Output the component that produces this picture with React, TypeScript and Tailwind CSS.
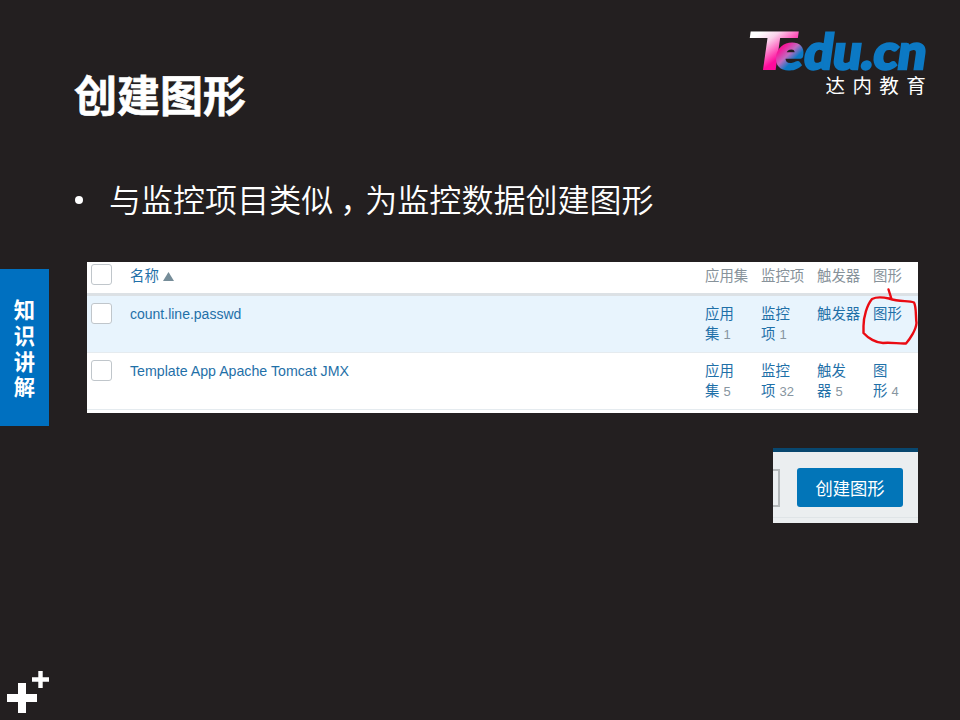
import React from "react";

const CJK = "font-['Noto_Sans_CJK_SC',sans-serif]";
const MIXED = "font-['Liberation_Sans','Noto_Sans_CJK_SC',sans-serif]";

function Logo() {
  return (
    <svg width="190" height="80" viewBox="740 22 190 80" className="block overflow-visible">
      <defs>
        <linearGradient id="tFill" gradientUnits="userSpaceOnUse" x1="6" y1="-36" x2="27" y2="-20">
          <stop offset="0" stopColor="#ffffff" />
          <stop offset="0.35" stopColor="#fbd3ec" />
          <stop offset="1" stopColor="#ff0a9c" />
        </linearGradient>
        <linearGradient id="eFill" gradientUnits="userSpaceOnUse" x1="4" y1="-20" x2="20" y2="-7">
          <stop offset="0" stopColor="#f5189a" />
          <stop offset="0.45" stopColor="#c06bc0" />
          <stop offset="0.85" stopColor="#0c79c4" />
        </linearGradient>
      </defs>
      <g fontFamily="Lato" fontWeight="900">
        <text transform="translate(744 70) skewX(-8) scale(1.58 1)" fontSize="53" fill="url(#tFill)">T</text>
        <text transform="translate(774 69) skewX(-8) scale(1.06 1)" fontSize="48.500" fill="url(#eFill)" stroke="url(#eFill)" strokeWidth="2.400">e</text>
        <text transform="translate(802.500 69) skewX(-8)" fontSize="48.500" fill="#0c79c4" stroke="#0c79c4" strokeWidth="2.600" textLength="122" lengthAdjust="spacingAndGlyphs">du.cn</text>
      </g>
      <text x="825.5" y="93" fontFamily="Noto Sans CJK SC" fontSize="19.5" letterSpacing="7.400" fill="#ffffff">达内教育</text>
    </svg>
  );
}

function Check() {
  return <span className="block h-[21px] w-[21px] shrink-0 rounded-[3px] border border-[#c0c6cb] bg-white" />;
}

function Cell({ lines, count }: { lines: string[]; count?: string }) {
  return (
    <div className="w-14 shrink-0 whitespace-nowrap text-[#1f70a8]">
      {lines.map((line, i) => (
        <div key={line} className="h-5">
          {line}
          {count && i === lines.length - 1 && <span className="ml-1 text-[13px] text-[#8795a0]">{count}</span>}
        </div>
      ))}
    </div>
  );
}

export default function App() {
  return (
    <div className={`flex h-[720px] w-[960px] overflow-hidden bg-[#231f20] text-white ${CJK}`}>
      <aside className="flex w-[49px] shrink-0 flex-col justify-between pt-[269px]">
        <div className="flex h-[157px] flex-col items-center justify-center bg-[#0070c0] text-[21.3px] leading-[25.6px] font-bold">
          <span>知</span>
          <span>识</span>
          <span>讲</span>
          <span>解</span>
        </div>
        <svg width="49" height="60" viewBox="0 660 49 60" className="block" fill="#fff">
          <path d="M18 683h8v11h11v8h-11v11h-8v-11h-11v-8h11zM38.300 671h4.400v6.300h6.300v4.400h-6.300v6.300h-4.400v-6.300h-6.300v-4.400h6.300z" />
        </svg>
      </aside>

      <main className="flex w-[911px] flex-col">
        <header className="flex h-[150px] justify-between pt-[22px] pr-[30px] pl-[25px]">
          <h1 className="pt-[39px] text-[43px] leading-[64px] font-bold [-webkit-text-stroke:0.6px_white]">创建图形</h1>
          <Logo />
        </header>

        <div className="flex h-[112px] items-start pt-[24px] pl-[26px]">
          <span className="mt-[22px] mr-[26px] h-2 w-2 rounded-full bg-white" />
          <p className="text-[32px] leading-[48px] font-[350] tracking-[0.04px] whitespace-nowrap">与监控项目类似<span className="inline-block w-8 translate-x-[7px]">，</span>为监控数据创建图形</p>
        </div>

        <section className={`relative ml-[38px] h-[151px] w-[831px] shrink-0 bg-white text-[14.4px] leading-5 ${MIXED}`}>
          <div className="flex h-[34px] border-b-[3px] border-[#dce1e5] pt-[2px] pl-1">
            <Check />
            <div className="mt-[2px] ml-[18px] flex w-[575px] shrink-0 gap-1 text-[#1f70a8]">
              名称
              <svg width="12" height="20" viewBox="0 0 12 20" fill="#768d99">
                <path d="M0 15L5.500 6L11 15z" />
              </svg>
            </div>
            <div className="mt-[2px] flex whitespace-nowrap text-[#87929a]">
              <span className="w-14 shrink-0">应用集</span>
              <span className="w-14 shrink-0">监控项</span>
              <span className="w-14 shrink-0">触发器</span>
              <span className="w-10 shrink-0">图形</span>
            </div>
          </div>
          <div className="flex h-[57px] border-b border-[#e5ebef] bg-[#e8f4fd] pt-[7px] pl-1">
            <Check />
            <div className="mt-[1px] ml-[18px] w-[575px] shrink-0 text-[14px] text-[#1f70a8]">count.line.passwd</div>
            <div className="mt-[1px] flex">
              <Cell lines={["应用", "集"]} count="1" />
              <Cell lines={["监控", "项"]} count="1" />
              <Cell lines={["触发器"]} />
              <Cell lines={["图形"]} />
            </div>
          </div>
          <div className="flex h-[57px] border-b border-[#e5ebef] pt-[7px] pl-1">
            <Check />
            <div className="mt-[1px] ml-[18px] w-[575px] shrink-0 text-[14.2px] text-[#1f70a8]">Template App Apache Tomcat JMX</div>
            <div className="mt-[1px] flex">
              <Cell lines={["应用", "集"]} count="5" />
              <Cell lines={["监控", "项"]} count="32" />
              <Cell lines={["触发", "器"]} count="5" />
              <Cell lines={["图", "形"]} count="4" />
            </div>
          </div>
          <svg className="absolute top-0 right-0" width="61" height="90" viewBox="857 262 61 90" fill="none" stroke="#ea0b13" strokeWidth="2.400" strokeLinecap="round" strokeLinejoin="round">
            <path d="M888.500 289.500L891.500 299M889 298.500C882 297 876 297 872 299C867 305 863.500 317 863.500 326V333C868 338 876 343 883 343C891 342 899 344 906 343.500C910 339 916 330 916.500 323C915.500 316 916.500 307 914 302.500C908 300 900 302.500 889 298.500" />
          </svg>
        </section>

        <section className="mt-[35px] ml-[724px] flex h-[75px] w-[145px] shrink-0 flex-col border-t-[4px] border-[#08476f] bg-[#ebeef0]">
          <div className="flex h-[66px] items-start justify-between border-b border-[#dfe4e7] pt-[16px] pr-[15px]">
            <span className="mt-[1px] h-[38px] w-[7px] border-2 border-l-0 border-[#b4b8ba]" />
            <button className="h-[39px] w-[106px] rounded-[3px] bg-[#0275b8] pt-px text-[17.3px] leading-[38px]">创建图形</button>
          </div>
        </section>
      </main>
    </div>
  );
}
